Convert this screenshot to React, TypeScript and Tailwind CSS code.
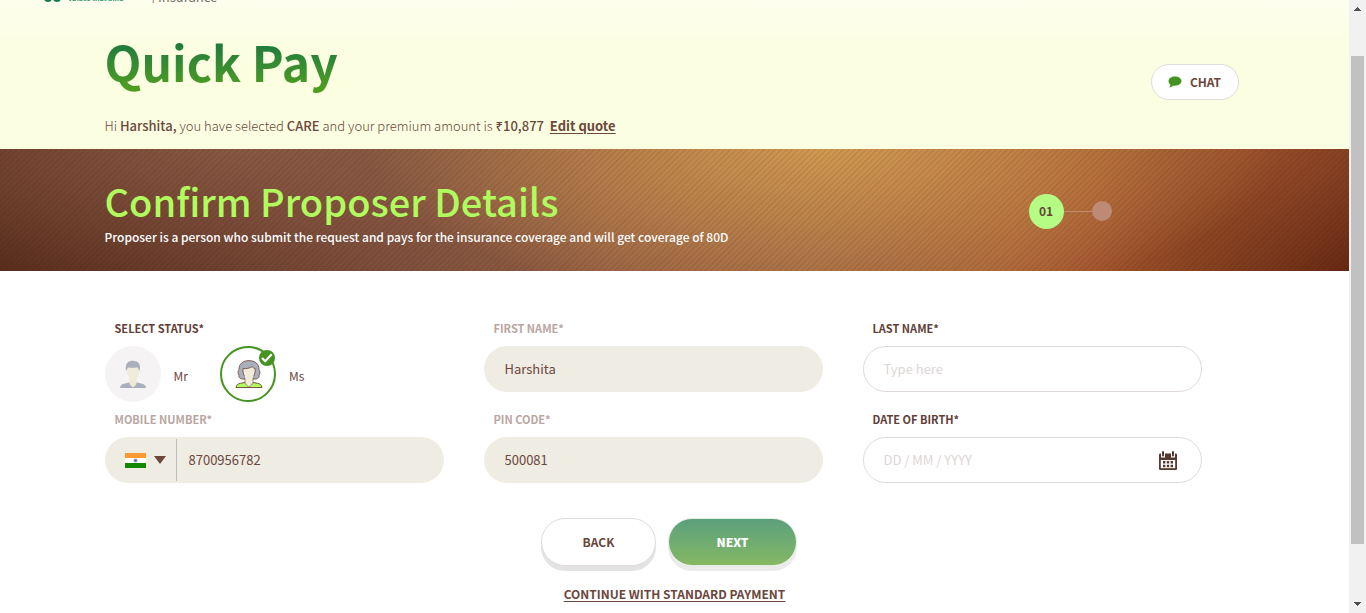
import { useState } from "react";
import type { ReactNode } from "react";

const labelBase = "flex h-4 items-start pl-[10px] text-[11px] font-bold leading-[14px]";
const fieldBase =
  "h-[46px] w-full rounded-full border px-5 pb-[2px] text-[13px] leading-5 outline-none placeholder:text-[#dcd6d5]";

function Field({
  id,
  label,
  muted,
  children,
}: {
  id: string;
  label: string;
  muted?: boolean;
  children: ReactNode;
}) {
  return (
    <div className="flex flex-col gap-[9px]">
      <label htmlFor={id} className={`${labelBase} ${muted ? "text-[#b9a6a1]" : "text-[#5f4037]"}`}>
        {label}
      </label>
      {children}
    </div>
  );
}

function ManIcon() {
  return (
    <svg viewBox="0 0 26 28" className="h-7 w-[26px]" aria-hidden="true">
      <path d="M0 28c0-3 2-4 5-4.600l4-.8h8l4 .8c3 .6 5 1.600 5 4.600z" fill="#a9b0bb" />
      <path d="M9.500 18h7v5c0 1.500-2 3.500-3.500 4.500-1.500-1-3.500-3-3.500-4.500z" fill="#efe8d6" />
      <path d="M6.600 8c0-3.500 3-5 6.500-5s6.500 2 6.500 5.500c0 3-.6 5.500-1.800 7.600-1.200 2.400-3 4.100-4.700 4.100s-3.500-1.700-4.700-4.100C7.200 14 6.600 11 6.600 8z" fill="#f1ebda" />
      <path d="M6 11C5 5 7 1.500 11.500.8c5-.8 8.500 2.200 8.500 6.200 0 1.500-.3 3-.8 4.200-.5-1.600-.9-3-2-4-3.200.9-6.600.5-8.700.2C7.300 8.300 6.700 9.500 6 11z" fill="#a9b0bb" />
    </svg>
  );
}

function WomanIcon() {
  return (
    <svg viewBox="0 0 28 28" className="ml-[2px] h-7 w-7" aria-hidden="true">
      <path d="M1 27.500c.3-2.600 1.800-3.700 4.500-4.200L10 22.500h8l4.500.8c2.700.5 4.200 1.600 4.500 4.200z" fill="#b0fb5d" stroke="#6a4239" strokeWidth=".9" />
      <path
        d="M9 19C5.500 19.500 3.200 17.500 4 15.200 2.600 13.500 2.800 11 4 9.500 3.800 4 8 .6 14 .6S24.200 4 24 9.500c1.200 1.500 1.400 4 0 5.700.8 2.300-1.500 4.300-5 3.800z"
        fill="#a9b0bb"
        stroke="#6a4239"
        strokeWidth=".8"
      />
      <path d="M10 15h8v7.500c0 1.300-2.200 3.200-4 4.800-1.800-1.600-4-3.500-4-4.800z" fill="#f1ebda" />
      <path d="M10 18v4.500c0 1.300 2.200 3.200 4 4.800 1.800-1.600 4-3.500 4-4.800V18" fill="none" stroke="#6a4239" strokeWidth=".6" />
      <path d="M8 8.600c3.500.2 7-.4 9-2 .8 1 1.900 1.700 3.200 2 .3 5.400-2.200 10.900-6.200 10.900S7.700 14 8 8.600z" fill="#f1ebda" />
      <path d="M9.500 16.500C8.200 14 7.800 11 8 8.600c3.500.2 7-.4 9-2 .8 1 1.900 1.700 3.200 2 .2 2.400-.3 5.400-1.600 7.900" fill="none" stroke="#6a4239" strokeWidth=".8" />
    </svg>
  );
}

function CheckBadge() {
  return (
    <svg viewBox="0 0 16 16" className="absolute -right-px top-[2px] h-4 w-4" aria-hidden="true">
      <circle cx="8" cy="8" r="8" fill="#459422" />
      <path d="M3 8l3.200 3.200 6.500-7" fill="none" stroke="#fff" strokeWidth="2.200" />
    </svg>
  );
}

function IndiaFlag() {
  return (
    <svg viewBox="0 0 21 15" className="h-[15px] w-[21px]" aria-hidden="true">
      <rect width="21" height="15" fill="#fff" />
      <rect width="21" height="5" fill="#fd9933" />
      <rect y="10" width="21" height="5" fill="#148801" />
      <circle cx="10.500" cy="7.500" r="2" fill="#8f94cb" />
      <circle cx="10.500" cy="7.500" r=".8" fill="#4a509a" />
    </svg>
  );
}

function CalendarIcon() {
  return (
    <svg viewBox="0 0 18 19" className="h-[19px] w-[18px]" aria-hidden="true">
      <path d="M0 4c0-1 .5-1.500 1.500-1.500h15c1 0 1.500.5 1.500 1.500v13.500c0 1-.5 1.500-1.500 1.500h-15C.5 19 0 18.500 0 17.500z" fill="#563830" />
      <path d="M2 0h4v6.500H2zM12 0h4v6.500h-4z" fill="#fff" />
      <rect x="3" y="0" width="2" height="5.500" rx="1" fill="#563830" />
      <rect x="13" y="0" width="2" height="5.500" rx="1" fill="#563830" />
      <rect x="1.800" y="9" width="14.400" height="8.200" fill="#fff" />
      <path d="M4 10h2.400v2.400H4zM7.800 10h2.400v2.400H7.800zM11.600 10H14v2.400h-2.400zM4 13.800h2.400v2.400H4zM7.800 13.800h2.400v2.400H7.800zM11.600 13.800H14v2.400h-2.400z" fill="#563830" />
    </svg>
  );
}

function StatusOption({
  label,
  checked,
  onSelect,
  children,
}: {
  label: string;
  checked: boolean;
  onSelect: () => void;
  children: ReactNode;
}) {
  return (
    <label className="relative flex cursor-pointer items-center gap-[13px] text-[12px] text-[#6b473c]">
      <input type="radio" name="status" checked={checked} onChange={onSelect} className="sr-only" />
      <span
        className={`relative flex h-14 w-14 items-center justify-center rounded-full ${
          checked ? "border-2 border-[#459422] bg-white" : "bg-[#f5f3f4]"
        }`}
      >
        {children}
        {checked && <CheckBadge />}
      </span>
      <span className="pt-1 leading-5">{label}</span>
    </label>
  );
}

export default function App() {
  const [status, setStatus] = useState("Ms");

  return (
    <div className="flex min-h-screen bg-white font-['Noto_Sans_CJK_SC','Noto_Sans',sans-serif] text-[13px] text-[#6b473c]">
      <main className="min-w-0 flex-1">
        <header className="bg-linear-to-b from-[#fdfeee] to-[#fcfee2] to-30%">
          <div className="flex h-[3px] items-end gap-7 overflow-hidden pl-11">
            <div className="flex items-end gap-[7px]">
              <svg viewBox="0 0 17 10" className="h-[10px] w-[17px] shrink-0" aria-hidden="true">
                <circle cx="4" cy="5" r="4" fill="#137a4b" />
                <circle cx="13" cy="5" r="4" fill="#137a4b" />
              </svg>
              <span className="text-[7px] font-bold leading-[9px] text-[#2f9a6b]">Values that bind</span>
            </div>
            <span className="text-[13px] leading-[13px] text-[#77736a]">| Insurance</span>
          </div>
          <div className="mx-auto flex max-w-[1140px] items-start justify-between pr-[6px]">
            <div>
              <h1 className="mt-[22px] bg-linear-to-b from-[#1c7a3c] from-25% to-[#4f9f1c] to-90% bg-clip-text text-[48px] font-bold leading-[72px] text-transparent">
                Quick Pay
              </h1>
              <p className="mt-[19px] pb-[13px] font-light leading-5">
                Hi <span className="font-medium">Harshita,</span> you have selected{" "}
                <span className="font-medium">CARE</span> and your premium amount is{" "}
                <span className="font-medium">₹10,877</span>{" "}
                <a href="#edit" className="ml-[3px] font-bold underline underline-offset-2">
                  Edit quote
                </a>
              </p>
            </div>
            <button
              type="button"
              className="mt-[61px] flex h-9 w-[88px] items-center justify-center gap-2 rounded-full border border-[#e0dcdc] bg-white text-[12px] font-bold text-[#6b473c]"
            >
              <svg viewBox="0 0 14 12" className="h-3 w-[14px]" aria-hidden="true">
                <path
                  d="M7 .5c3.600 0 6.500 2 6.500 4.600S10.600 9.800 7 9.800c-.6 0-1.200 0-1.700-.2-.9.900-2.300 1.700-4.100 1.900.8-.8 1.200-1.700 1.200-2.700C1.200 8 .5 6.600.5 5.100.5 2.500 3.400.5 7 .5z"
                  fill="#459422"
                />
              </svg>
              CHAT
            </button>
          </div>
        </header>

        <section className="bg-[repeating-linear-gradient(135deg,rgba(50,15,0,0.09)_0px,rgba(50,15,0,0.09)_1px,transparent_2px,transparent_4px),radial-gradient(ellipse_34%_130%_at_61%_0%,rgba(214,158,82,0.9)_0%,rgba(206,148,78,0.65)_40%,rgba(190,130,70,0)_100%),radial-gradient(ellipse_45%_120%_at_18%_0%,rgba(146,98,74,0.75)_0%,rgba(140,90,66,0)_100%),radial-gradient(ellipse_30%_110%_at_92%_0%,rgba(164,88,50,0.7)_0%,rgba(150,76,42,0)_100%),linear-gradient(90deg,#552a1a_0%,#66392a_15%,#7c4e3b_30%,#946044_45%,#9f6746_60%,#a96239_75%,#a3552f_81%,#84401f_89%,#642612_100%)]">
          <div className="mx-auto flex max-w-[1140px] items-center justify-between pr-[133px]">
            <div className="pb-6 pt-[25px]">
              <h2 className="text-[38px] font-medium leading-[53px] text-[#b0fb5d]">Confirm Proposer Details</h2>
              <p className="text-[12px] font-medium leading-5 text-white">
                Proposer is a person who submit the request and pays for the insurance coverage and will get coverage of
                80D
              </p>
            </div>
            <ol className="flex items-center pt-[2px]">
              <li className="flex h-[35px] w-[35px] items-center justify-center rounded-full bg-[#b5fc84] text-[12px] font-bold text-[#63483a]">
                01
              </li>
              <li className="flex items-center" aria-label="Step 2">
                <span className="h-px w-7 bg-[#c08a70]" />
                <span className="h-5 w-5 rounded-full bg-[#bd8b75]" />
              </li>
            </ol>
          </div>
        </section>

        <form className="mx-auto max-w-[1140px] pt-[50px]" onSubmit={(e) => e.preventDefault()}>
          <div className="grid grid-cols-3 gap-x-10 pr-[43px]">
            <fieldset className="h-[91px]">
              <legend className={`${labelBase} text-[#5f4037]`}>SELECT STATUS*</legend>
              <div className="mt-[9px] flex gap-8">
                <StatusOption label="Mr" checked={status === "Mr"} onSelect={() => setStatus("Mr")}>
                  <ManIcon />
                </StatusOption>
                <StatusOption label="Ms" checked={status === "Ms"} onSelect={() => setStatus("Ms")}>
                  <WomanIcon />
                </StatusOption>
              </div>
            </fieldset>

            <Field id="first" label="FIRST NAME*" muted>
              <input id="first" readOnly value="Harshita" className={`${fieldBase} border-[#efece3] bg-[#efece3]`} />
            </Field>

            <Field id="last" label="LAST NAME*">
              <input id="last" placeholder="Type here" className={`${fieldBase} border-[#e0d9da] bg-white`} />
            </Field>

            <Field id="mobile" label="MOBILE NUMBER*" muted>
              <div className="flex h-[46px] items-center rounded-full bg-[#efece3]">
                <div className="relative flex h-[42px] w-[72px] items-center gap-2 border-r border-[#bcbcba] pl-5">
                  <IndiaFlag />
                  <svg viewBox="0 0 12 8" className="h-2 w-3" aria-hidden="true">
                    <path d="M0 0h12L6 8z" fill="#6b473c" />
                  </svg>
                  <select aria-label="Country" className="absolute inset-0 opacity-0">
                    <option>India</option>
                  </select>
                </div>
                <input
                  id="mobile"
                  type="tel"
                  readOnly
                  value="8700956782"
                  className="min-w-0 flex-1 bg-transparent px-3 leading-5 outline-none"
                />
              </div>
            </Field>

            <Field id="pin" label="PIN CODE*" muted>
              <input id="pin" readOnly value="500081" className={`${fieldBase} border-[#efece3] bg-[#efece3]`} />
            </Field>

            <Field id="dob" label="DATE OF BIRTH*">
              <div className="flex h-[46px] items-center rounded-full border border-[#e0d9da] bg-white pl-5 pr-6">
                <input
                  id="dob"
                  placeholder="DD / MM / YYYY"
                  className="min-w-0 flex-1 bg-transparent text-[13px] leading-5 outline-none placeholder:text-[#dcd6d5]"
                />
                <button type="button" aria-label="Open calendar">
                  <CalendarIcon />
                </button>
              </div>
            </Field>
          </div>

          <div className="mt-[35px] flex justify-center gap-3 pr-[11px]">
            <button
              type="button"
              className="h-12 w-[115px] rounded-full border border-[#e3dadc] bg-white text-[12px] font-bold shadow-[0_5px_0_#e3e3e3]"
            >
              BACK
            </button>
            <button
              type="submit"
              className="h-12 w-[129px] rounded-full border border-[#e6ebe4] bg-linear-to-b from-[#5a9f7c] to-[#86b962] bg-origin-border text-[12px] font-black text-white shadow-[0_5px_0_#ebebeb]"
            >
              NEXT
            </button>
          </div>
          <div className="mt-[18px] flex justify-center">
            <a href="#standard" className="text-[12px] font-bold leading-5 underline underline-offset-2">
              CONTINUE WITH STANDARD PAYMENT
            </a>
          </div>
        </form>
      </main>

      <div className="flex w-[17px] shrink-0 flex-col items-center bg-[#f1f1f1]" aria-hidden="true">
        <svg viewBox="0 0 7 4" className="mt-[7px] h-1 w-[7px]">
          <path d="M3 0h1v1h1v1h1v1h1v1H0V3h1V2h1V1h1z" fill="#505050" />
        </svg>
        <div className="mt-[45px] w-[13px] flex-1 bg-[#c1c1c1]" />
        <svg viewBox="0 0 7 4" className="mb-[7px] mt-[58px] h-1 w-[7px]">
          <path d="M0 0h7v1H6v1H5v1H4v1H3V3H2V2H1V1H0z" fill="#505050" />
        </svg>
      </div>
    </div>
  );
}
